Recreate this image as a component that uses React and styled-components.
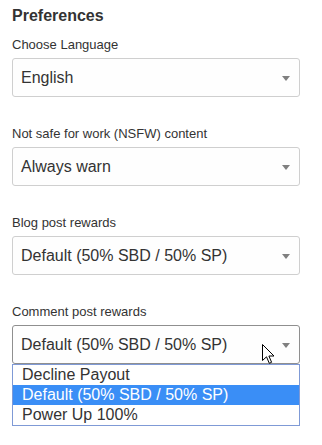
import React from "react";
import styled, { createGlobalStyle } from "styled-components";

const Global = createGlobalStyle`
  html, body { margin: 0; padding: 0; background: #fff; }
  body { font-family: "Liberation Sans", Arial, sans-serif; color: #333; }
`;

const Page = styled.div`
  position: relative;
  width: 322px;
  height: 445px;
  padding: 6px 22px 0 12px;
  box-sizing: border-box;
`;

const Title = styled.h2`
  margin: 0 0 12px;
  font-size: 16px;
  line-height: 19px;
  font-weight: 700;
  color: #333;
`;

const Field = styled.div`
  position: relative;
  display: flex;
  flex-direction: column;
  gap: 6px;
  margin-bottom: 29px;
`;

const Label = styled.label`
  font-size: 13px;
  line-height: 15px;
  color: #333;
`;

const SelectBox = styled.div`
  position: relative;
  display: flex;
  align-items: center;
  justify-content: space-between;
  height: 39px;
  box-sizing: border-box;
  padding: 0 9px 0 8px;
  border: 1px solid ${(p) => (p.$active ? "#8f8f8f" : "#cfcfcf")};
  border-radius: 3px;
  background: #fefefe;
  font-size: 16px;
  color: #333;
`;

const Arrow = styled.span`
  width: 0;
  height: 0;
  border-left: 4px solid transparent;
  border-right: 4px solid transparent;
  border-top: 5px solid #808080;
  margin-top: 1px;
`;

const Menu = styled.ul`
  position: absolute;
  left: -1px;
  right: -1px;
  top: calc(100% + 1px);
  margin: 0;
  padding: 0;
  list-style: none;
  border: 1px solid #7f9ad6;
  background: #fff;
  z-index: 2;
`;

const Option = styled.li`
  height: 20px;
  line-height: 20px;
  padding-left: 9px;
  font-size: 16px;
  color: ${(p) => (p.$selected ? "#fff" : "#333")};
  background: ${(p) => (p.$selected ? "#3a8ef6" : "transparent")};
  white-space: nowrap;
`;

const Pointer = styled.svg`
  position: absolute;
  left: 262px;
  top: 344px;
  z-index: 3;
`;

const fields = [
  { label: "Choose Language", value: "English" },
  { label: "Not safe for work (NSFW) content", value: "Always warn" },
  { label: "Blog post rewards", value: "Default (50% SBD / 50% SP)" },
];

export default function App() {
  return (
    <>
      <Global />
      <Page>
        <Title>Preferences</Title>
        {fields.map((f) => (
          <Field key={f.label}>
            <Label>{f.label}</Label>
            <SelectBox>
              <span>{f.value}</span>
              <Arrow />
            </SelectBox>
          </Field>
        ))}
        <Field>
          <Label>Comment post rewards</Label>
          <SelectBox $active>
            <span>Default (50% SBD / 50% SP)</span>
            <Arrow />
            <Menu>
              <Option>Decline Payout</Option>
              <Option $selected>Default (50% SBD / 50% SP)</Option>
              <Option>Power Up 100%</Option>
            </Menu>
          </SelectBox>
        </Field>
        <Pointer width="14" height="21" viewBox="0 0 14 21">
          <path
            d="M0.5 0.5 L0.5 16.5 L4.5 12.8 L7.3 19.3 L9.6 18.3 L6.9 12 L12 12 Z"
            fill="#fff"
            stroke="#000"
            strokeWidth="1"
            strokeLinejoin="miter"
          />
        </Pointer>
      </Page>
    </>
  );
}
